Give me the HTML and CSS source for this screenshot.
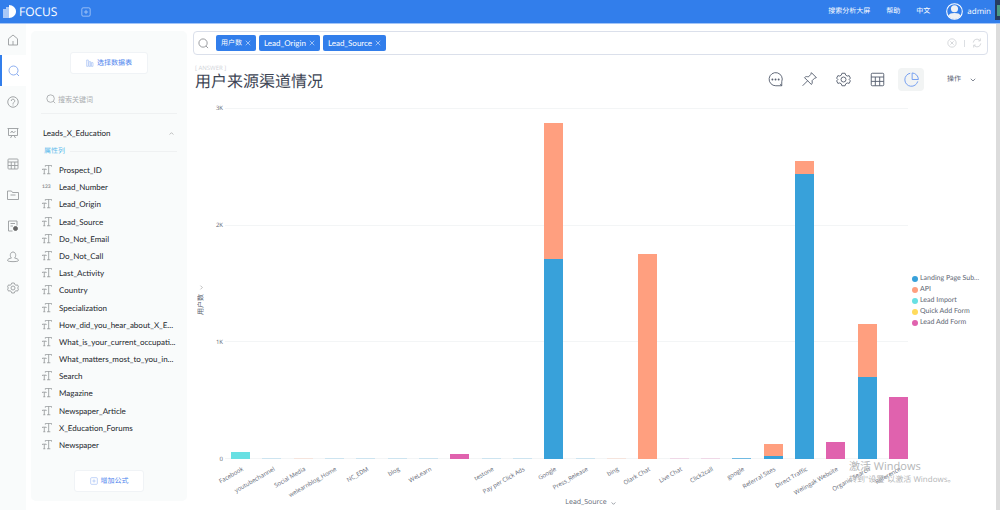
FILE: index.html
```html
<!DOCTYPE html>
<html lang="zh-CN">
<head>
<meta charset="utf-8">
<title>FOCUS</title>
<link rel="stylesheet" href="styles.css">
</head>
<body>
<svg class="sprite" aria-hidden="true">
  <symbol id="search" viewBox="0 0 24 24"><circle cx="11" cy="11" r="9"/><path d="M17.5 17.5 22 22"/></symbol>
  <symbol id="gear" viewBox="0 0 24 24"><path d="M9.5 2h5l1 3 2.500 1.500 3-.7 2 4-2 2.200 2 2.200-2 4-3-.7L15.500 19l-1 3h-5l-1-3L6 17.500l-3 .7-2-4L3 12 1 9.800l2-4 3 .7L8.500 5z"/><circle cx="12" cy="12" r="4"/></symbol>
  <symbol id="table" viewBox="0 0 24 24"><rect x="2" y="2" width="20" height="20" rx="1.500"/><path d="M2 8h20M2 15h20M8.500 8v14M15.500 8v14"/></symbol>
  <symbol id="text" viewBox="0 0 24 24"><path d="M8 4V1h15v3M16 1v20M12 21h8M1 12v-2h9v2M5.500 10v11M3 21h5"/></symbol>
  <symbol id="close" viewBox="0 0 24 24"><path d="m3 3 18 18M21 3 3 21"/></symbol>
  <symbol id="down" viewBox="0 0 24 24"><path d="m3 7 9 9 9-9"/></symbol>
  <symbol id="plus" viewBox="0 0 24 24"><rect x="2" y="2" width="20" height="20" rx="3"/><path d="M12 7v10M7 12h10"/></symbol>
</svg>

<header class="topbar">
  <a class="brand" href="#">
    <svg class="logo" viewBox="0 0 13 13"><path class="logo-soft" d="M0 4h3v9H0zM3 2h3v11H3z"/><path class="logo-solid" d="M6 0c4 0 7 3 7 6.500S10 13 6 13z"/></svg>
    <span>FOCUS</span>
  </a>
  <button class="top-add" aria-label="新建"><svg class="icon small"><use href="#plus"/></svg></button>
  <nav class="topnav">
    <a href="#">搜索分析大屏</a><a href="#">帮助</a><a href="#">中文</a>
    <a class="user" href="#">
      <svg class="avatar" viewBox="0 0 24 24"><circle class="ring" cx="12" cy="12" r="11"/><circle class="person" cx="12" cy="8" r="5"/><path class="person" d="M3.500 18c1-3 4-4 8.500-4s7.500 1 8.500 4c-2 3-5 4.500-8.500 4.500S5.500 21 3.500 18z"/></svg>
      <span>admin</span>
    </a>
  </nav>
  <div class="corner"><span></span></div>
</header>

<div class="shell">
  <nav class="rail">
    <a href="#" aria-label="首页"><svg class="icon" viewBox="0 0 24 24"><path d="M3 9.500 12 2l9 7.500V22H3zM12 14v8"/></svg></a>
    <a href="#" aria-label="搜索" class="current"><svg class="icon"><use href="#search"/></svg></a>
    <a href="#" aria-label="问答"><svg class="icon" viewBox="0 0 24 24"><circle cx="12" cy="12" r="10.500"/><path d="M8.500 10a3.500 3.500 0 1 1 5 3c-1 .6-1.500 1-1.500 2.500M12 17v2"/></svg></a>
    <a href="#" aria-label="看板"><svg class="icon" viewBox="0 0 24 24"><path d="M1 3h22M3 3v14h18V3M7 22l3-5M17 22l-3-5M7 12l3-4 3 4 4-4"/></svg></a>
    <a href="#" aria-label="数据表"><svg class="icon"><use href="#table"/></svg></a>
    <a href="#" aria-label="文件"><svg class="icon" viewBox="0 0 24 24"><path d="M1 4h8l2 3h12v14H1zM7 12h10"/></svg></a>
    <a href="#" aria-label="任务"><svg class="icon" viewBox="0 0 24 24"><path d="M11 22H3V2h17v9M7 7h9M7 12h5"/><circle class="dark" cx="17" cy="17" r="4"/></svg></a>
    <a href="#" aria-label="用户"><svg class="icon" viewBox="0 0 24 24"><path d="M9 14C5 11 6 2 12 2s7 9 3 12c4 1 8 2 8 5s-22 3-22 0 4-4 8-5z"/></svg></a>
    <a href="#" aria-label="设置"><svg class="icon"><use href="#gear"/></svg></a>
  </nav>

  <aside class="panel">
    <button class="card-button choose"><svg class="icon small" viewBox="0 0 24 24"><path d="M2 22V3h5v19zM9 22V8h5v14zM16 22V11h5v11z"/></svg>选择数据表</button>
    <label class="filter"><svg class="icon small"><use href="#search"/></svg><input type="text" placeholder="搜索关键词" aria-label="搜索关键词"></label>
    <button class="source">Leads_X_Education<svg class="icon chevron up"><use href="#down"/></svg></button>
    <h2 class="group">属性列</h2>
    <ul class="fields">
      <li><svg class="icon small"><use href="#text"/></svg><span>Prospect_ID</span></li>
      <li><b>123</b><span>Lead_Number</span></li>
      <li><svg class="icon small"><use href="#text"/></svg><span>Lead_Origin</span></li>
      <li><svg class="icon small"><use href="#text"/></svg><span>Lead_Source</span></li>
      <li><svg class="icon small"><use href="#text"/></svg><span>Do_Not_Email</span></li>
      <li><svg class="icon small"><use href="#text"/></svg><span>Do_Not_Call</span></li>
      <li><svg class="icon small"><use href="#text"/></svg><span>Last_Activity</span></li>
      <li><svg class="icon small"><use href="#text"/></svg><span>Country</span></li>
      <li><svg class="icon small"><use href="#text"/></svg><span>Specialization</span></li>
      <li><svg class="icon small"><use href="#text"/></svg><span>How_did_you_hear_about_X_E...</span></li>
      <li><svg class="icon small"><use href="#text"/></svg><span>What_is_your_current_occupati...</span></li>
      <li><svg class="icon small"><use href="#text"/></svg><span>What_matters_most_to_you_in...</span></li>
      <li><svg class="icon small"><use href="#text"/></svg><span>Search</span></li>
      <li><svg class="icon small"><use href="#text"/></svg><span>Magazine</span></li>
      <li><svg class="icon small"><use href="#text"/></svg><span>Newspaper_Article</span></li>
      <li><svg class="icon small"><use href="#text"/></svg><span>X_Education_Forums</span></li>
      <li><svg class="icon small"><use href="#text"/></svg><span>Newspaper</span></li>
    </ul>
    <button class="card-button formula"><svg class="icon small"><use href="#plus"/></svg>增加公式</button>
  </aside>

  <main class="content">
    <div class="searchbar">
      <svg class="icon"><use href="#search"/></svg>
      <button class="tag">用户数<svg class="icon tiny"><use href="#close"/></svg></button>
      <button class="tag">Lead_Origin<svg class="icon tiny"><use href="#close"/></svg></button>
      <button class="tag">Lead_Source<svg class="icon tiny"><use href="#close"/></svg></button>
      <div class="search-actions">
        <button aria-label="清除"><svg class="icon small" viewBox="0 0 24 24"><circle cx="12" cy="12" r="10"/><path d="m8 8 8 8M16 8l-8 8"/></svg></button>
        <i></i>
        <button aria-label="刷新"><svg class="icon small" viewBox="0 0 24 24"><path d="M3 11a9 9 0 0 1 16-5M21 13a9 9 0 0 1-16 5M20 1v6h-5M4 23v-6h5"/></svg></button>
      </div>
    </div>

    <div class="heading">
      <div class="titles"><small>[ ANSWER ]</small><h1>用户来源渠道情况</h1></div>
      <div class="tools">
        <button aria-label="评论"><svg class="icon large" viewBox="0 0 24 24"><path d="M22 22h-9.500A10.500 10.500 0 1 1 22 15.500zM22 22l-2.500-3"/><path class="dots" d="M7 12h.1M12 12h.1M17 12h.1"/></svg></button>
        <button aria-label="固定"><svg class="icon large" viewBox="0 0 24 24"><path d="m15 1 8 8-3 1-4 4c1 3 0 5-1 6L4 9c2-2 4-2 6-1l4-4zM9 14l-8 8"/></svg></button>
        <button aria-label="设置"><svg class="icon large"><use href="#gear"/></svg></button>
        <button aria-label="表格"><svg class="icon large"><use href="#table"/></svg></button>
        <button aria-label="图表" class="active"><svg class="icon large" viewBox="0 0 24 24"><path d="M10 2A10.500 10.500 0 1 0 22 15M13 1.500V12h10A10.500 10.500 0 0 0 13 1.500z"/></svg></button>
        <button class="more">操作<svg class="icon tiny"><use href="#down"/></svg></button>
      </div>
    </div>

    <section class="chart">
      <button class="y-title">用户数<svg class="icon chevron"><use href="#down"/></svg></button>
      <div class="ticks"><span>3K</span><span>2K</span><span>1K</span><span>0</span></div>
      <div class="plot">
        <div class="bar"><i class="import" style="height:1.9%"></i><span>Facebook</span></div>
        <div class="bar"><i class="landing trace"></i><span>youtubechannel</span></div>
        <div class="bar"><i class="api trace"></i><span>Social Media</span></div>
        <div class="bar"><i class="landing trace"></i><span>welearnblog_Home</span></div>
        <div class="bar"><i class="landing trace"></i><span>NC_EDM</span></div>
        <div class="bar"><i class="landing trace"></i><span>blog</span></div>
        <div class="bar"><i class="landing trace"></i><span>WeLearn</span></div>
        <div class="bar"><i class="leadadd" style="height:1.3%"></i></div>
        <div class="bar"><i class="landing trace"></i><span>testone</span></div>
        <div class="bar"><i class="landing trace"></i><span>Pay per Click Ads</span></div>
        <div class="bar"><i class="api" style="height:38.6%"></i><i class="landing" style="height:57%"></i><span>Google</span></div>
        <div class="bar"><i class="landing trace"></i><span>Press_Release</span></div>
        <div class="bar"><i class="api trace"></i><span>bing</span></div>
        <div class="bar"><i class="api" style="height:58.5%"></i><span>Olark Chat</span></div>
        <div class="bar"><i class="leadadd trace"></i><span>Live Chat</span></div>
        <div class="bar"><i class="leadadd trace"></i><span>Click2call</span></div>
        <div class="bar"><i class="landing some"></i><span>google</span></div>
        <div class="bar"><i class="api" style="height:3.3%"></i><i class="landing" style="height:0.9%"></i><span>Referral Sites</span></div>
        <div class="bar"><i class="api" style="height:3.6%"></i><i class="landing" style="height:81.2%"></i><span>Direct Traffic</span></div>
        <div class="bar"><i class="leadadd" style="height:4.8%"></i><span>Welingak Website</span></div>
        <div class="bar"><i class="api" style="height:15.2%"></i><i class="landing" style="height:23.3%"></i><span>Organic Search</span></div>
        <div class="bar"><i class="leadadd" style="height:17.8%"></i><span>Reference</span></div>
      </div>
      <ul class="legend">
        <li><i class="landing"></i>Landing Page Sub...</li>
        <li><i class="api"></i>API</li>
        <li><i class="import"></i>Lead Import</li>
        <li><i class="quick"></i>Quick Add Form</li>
        <li><i class="leadadd"></i>Lead Add Form</li>
      </ul>
    </section>
    <button class="x-title">Lead_Source<svg class="icon chevron"><use href="#down"/></svg></button>
  </main>
  <div class="scrollbar"></div>
</div>
<div class="watermark"><p>激活 Windows</p><p>转到"设置"以激活 Windows。</p></div>
</body>
</html>
```
FILE: styles.css
```css
* { box-sizing: border-box; margin: 0; padding: 0; }
body {
  display: flex;
  flex-direction: column;
  height: 100vh;
  min-height: 500px;
  font: 8px/12px "Open Sans", "Noto Sans CJK SC", sans-serif;
  text-rendering: geometricPrecision;
  color: #3d4554;
  background: #fff;
}
button { font: inherit; color: inherit; background: none; border: 0; display: flex; align-items: center; text-rendering: inherit; }
a { color: inherit; text-decoration: none; }
ul { list-style: none; }
.sprite { position: absolute; width: 0; height: 0; }
.icon { width: 12px; height: 12px; flex: none; fill: none; stroke: currentColor; stroke-width: 1.8; }
.icon.small { width: 10px; height: 10px; }
.icon.tiny { width: 6px; height: 6px; stroke-width: 3; }
.icon.large { width: 15px; height: 15px; }
.icon.chevron { width: 5px; height: 5px; stroke-width: 3; }
.icon.up { transform: rotate(180deg); }

.topbar {
  display: flex;
  align-items: center;
  height: 24px;
  flex: none;
  padding-left: 3px;
  color: #fff;
  background: #327eeb;
  border-bottom: 1px solid #a3c5f7;
}
.brand { display: flex; align-items: center; gap: 3px; font-size: 12px; width: 78px; }
.logo { width: 13px; height: 13px; }
.logo-soft { fill: #a9c9f8; }
.logo-solid { fill: #fff; }
.top-add { color: #b9d3f9; }
.topnav { display: flex; align-items: center; gap: 16px; margin-left: auto; font-size: 7px; }
.user { display: flex; align-items: center; gap: 4px; font-size: 8px; }
.avatar { width: 17px; height: 17px; }
.ring { fill: #327eeb; stroke: #fff; stroke-width: 1.5; }
.person { fill: #eef1f5; }
.corner { align-self: flex-start; width: 5px; height: 20px; margin-left: 4px; padding: 5px 0 4px 2px; background: #263d61; }
.corner span { display: block; height: 100%; background: #4b9a83; }

.shell { display: flex; flex: 1; min-height: 0; }
.rail { width: 26px; flex: none; background: #f9fbfb; color: #999c9e; }
.rail a { display: flex; align-items: center; justify-content: center; height: 31px; }
.rail .current { background: #fff; color: #7fa5ee; border-left: 2px solid #327eeb; }
.dark { fill: #666; stroke: #666; }

.panel, .tag, .legend { font-family: Lato, "Noto Sans CJK SC", sans-serif; }
.panel {
  display: flex;
  flex-direction: column;
  width: 156px;
  flex: none;
  margin: 7px 0 9px 5px;
  padding: 21px 10px 9px;
  background: #f9fbfb;
  border-radius: 5px;
}
.card-button {
  justify-content: center;
  gap: 3px;
  height: 22px;
  align-self: center;
  font-size: 7px;
  color: #4b83ee;
  background: #fff;
  border: 1px solid #f0f3f6;
  border-radius: 3px;
}
.card-button .icon { color: #9ab9f4; width: 8px; height: 8px; }
.choose { width: 78px; }
.formula { width: 70px; }
.filter { display: flex; align-items: center; gap: 2px; height: 30px; margin-top: 10px; padding-left: 5px; color: #9a9da0; border-bottom: 1px solid #eff1f2; }
.filter input { width: 90px; font: inherit; font-size: 7px; background: none; border: 0; outline: 0; }
.filter input::placeholder { color: #aaadb0; }
.source { justify-content: space-between; height: 14px; margin-top: 12px; padding: 0 3px 0 2px; color: #22262c; }
.source .icon { color: #999; }
.group { display: flex; align-items: center; gap: 5px; height: 12px; margin-top: 5px; padding-left: 3px; font-size: 7px; font-weight: 400; color: #62bcec; }
.group::after { content: ""; flex: 1; height: 1px; background: #eff1f2; }
.fields { display: flex; flex-direction: column; justify-content: space-between; flex: 1; margin: 7px 0 19px; }
.fields li { display: flex; align-items: center; gap: 7px; padding-left: 1px; color: #22262c; white-space: nowrap; }
.fields .icon, .fields b { width: 10px; color: #8c8f92; }
.fields b { font-size: 5px; }

.content { display: flex; flex-direction: column; flex: 1; min-width: 0; padding: 7px 8px 1px 6px; }
.searchbar { display: flex; align-items: center; gap: 3px; height: 24px; flex: none; padding: 0 5px 0 4px; border: 1px solid #dbe0eb; border-radius: 4px; }
.searchbar > .icon { width: 11px; height: 11px; margin-right: 4px; color: #85888d; }
.tag { gap: 3px; height: 16px; padding: 0 5px; color: #fff; background: #327eeb; border-radius: 2px; }
.tag:first-of-type { font-size: 7px; }
.tag .icon { stroke-width: 2.5; color: #dce9fc; }
.search-actions { display: flex; align-items: center; gap: 7px; margin-left: auto; color: #c9ccd0; }
.search-actions i { width: 1px; height: 7px; background: #dcdfe3; }

.heading { display: flex; align-items: center; justify-content: space-between; height: 44px; flex: none; padding: 5px 12px 0 2px; }
.titles small { display: block; font-size: 6px; line-height: 6px; color: #d0d3d8; }
.titles h1 { font-size: 16px; line-height: 20px; font-weight: 400; color: #3d4554; }
.titles { padding-bottom: 4px; }
.tools { display: flex; align-items: center; gap: 8px; color: #596171; }
.tools button { justify-content: center; width: 26px; height: 23px; border-radius: 4px; }
.tools .active { color: #6f9bf0; background: #f2f4f4; }
.tools .more { width: auto; gap: 9px; margin-left: 15px; font-size: 7px; }
.tools .icon.large { stroke-width: 1.5; }
.dots { stroke-width: 3; stroke-linecap: round; }

.chart { display: grid; grid-template-columns: 18px 14px 1fr 80px; flex: 1; min-height: 0; padding: 9px 0 38px; font-size: 7px; color: #606673; }
.y-title { writing-mode: vertical-rl; text-orientation: sideways; transform: rotate(180deg); justify-self: center; align-self: center; gap: 4px; line-height: 10px; margin-top: 32px; }
.y-title .icon { color: #999; transform: rotate(90deg); }
.ticks { display: flex; flex-direction: column; justify-content: space-between; margin: -5px 2px -5px 0; font-size: 6px; line-height: 10px; text-align: right; }
.plot {
  position: relative;
  display: flex;
  justify-content: space-between;
  padding-left: 6px;
  background:
    linear-gradient(#f3f5f6, #f3f5f6) 0 0 / 100% 1px no-repeat,
    linear-gradient(#f3f5f6, #f3f5f6) 0 33.333% / 100% 1px no-repeat,
    linear-gradient(#f3f5f6, #f3f5f6) 0 66.667% / 100% 1px no-repeat,
    linear-gradient(#f3f5f6, #f3f5f6) 0 100% / 100% 1px no-repeat;
}
.bar { position: relative; display: flex; flex-direction: column; justify-content: flex-end; width: 19px; }
.bar span { position: absolute; top: 100%; right: 50%; margin-top: 6px; font-size: 6px; line-height: 8px; white-space: nowrap; transform: rotate(-30deg); transform-origin: top right; }
.landing { background: #38a1da; }
.api { background: #ff9f7f; }
.import { background: #68e0e3; }
.quick { background: #ffdb5c; }
.leadadd { background: #e062ae; }
.trace { height: 1px; opacity: .2; }
.some { height: 1px; opacity: .7; }
.legend { align-self: center; padding-left: 4px; margin-top: 34px; line-height: 11px; white-space: nowrap; }
.legend li { display: flex; align-items: center; gap: 2px; }
.legend i { width: 6px; height: 6px; border-radius: 50%; }
.x-title { gap: 4px; align-self: center; font-size: 7px; color: #606673; }
.scrollbar { width: 4px; background: #dcdcdc; }

.watermark { position: absolute; right: 47px; bottom: 25px; width: 104px; color: #b4b6b8; font-size: 8px; line-height: 11px; white-space: nowrap; pointer-events: none; }
.watermark p:first-child { font-size: 11px; line-height: 15px; }
```
